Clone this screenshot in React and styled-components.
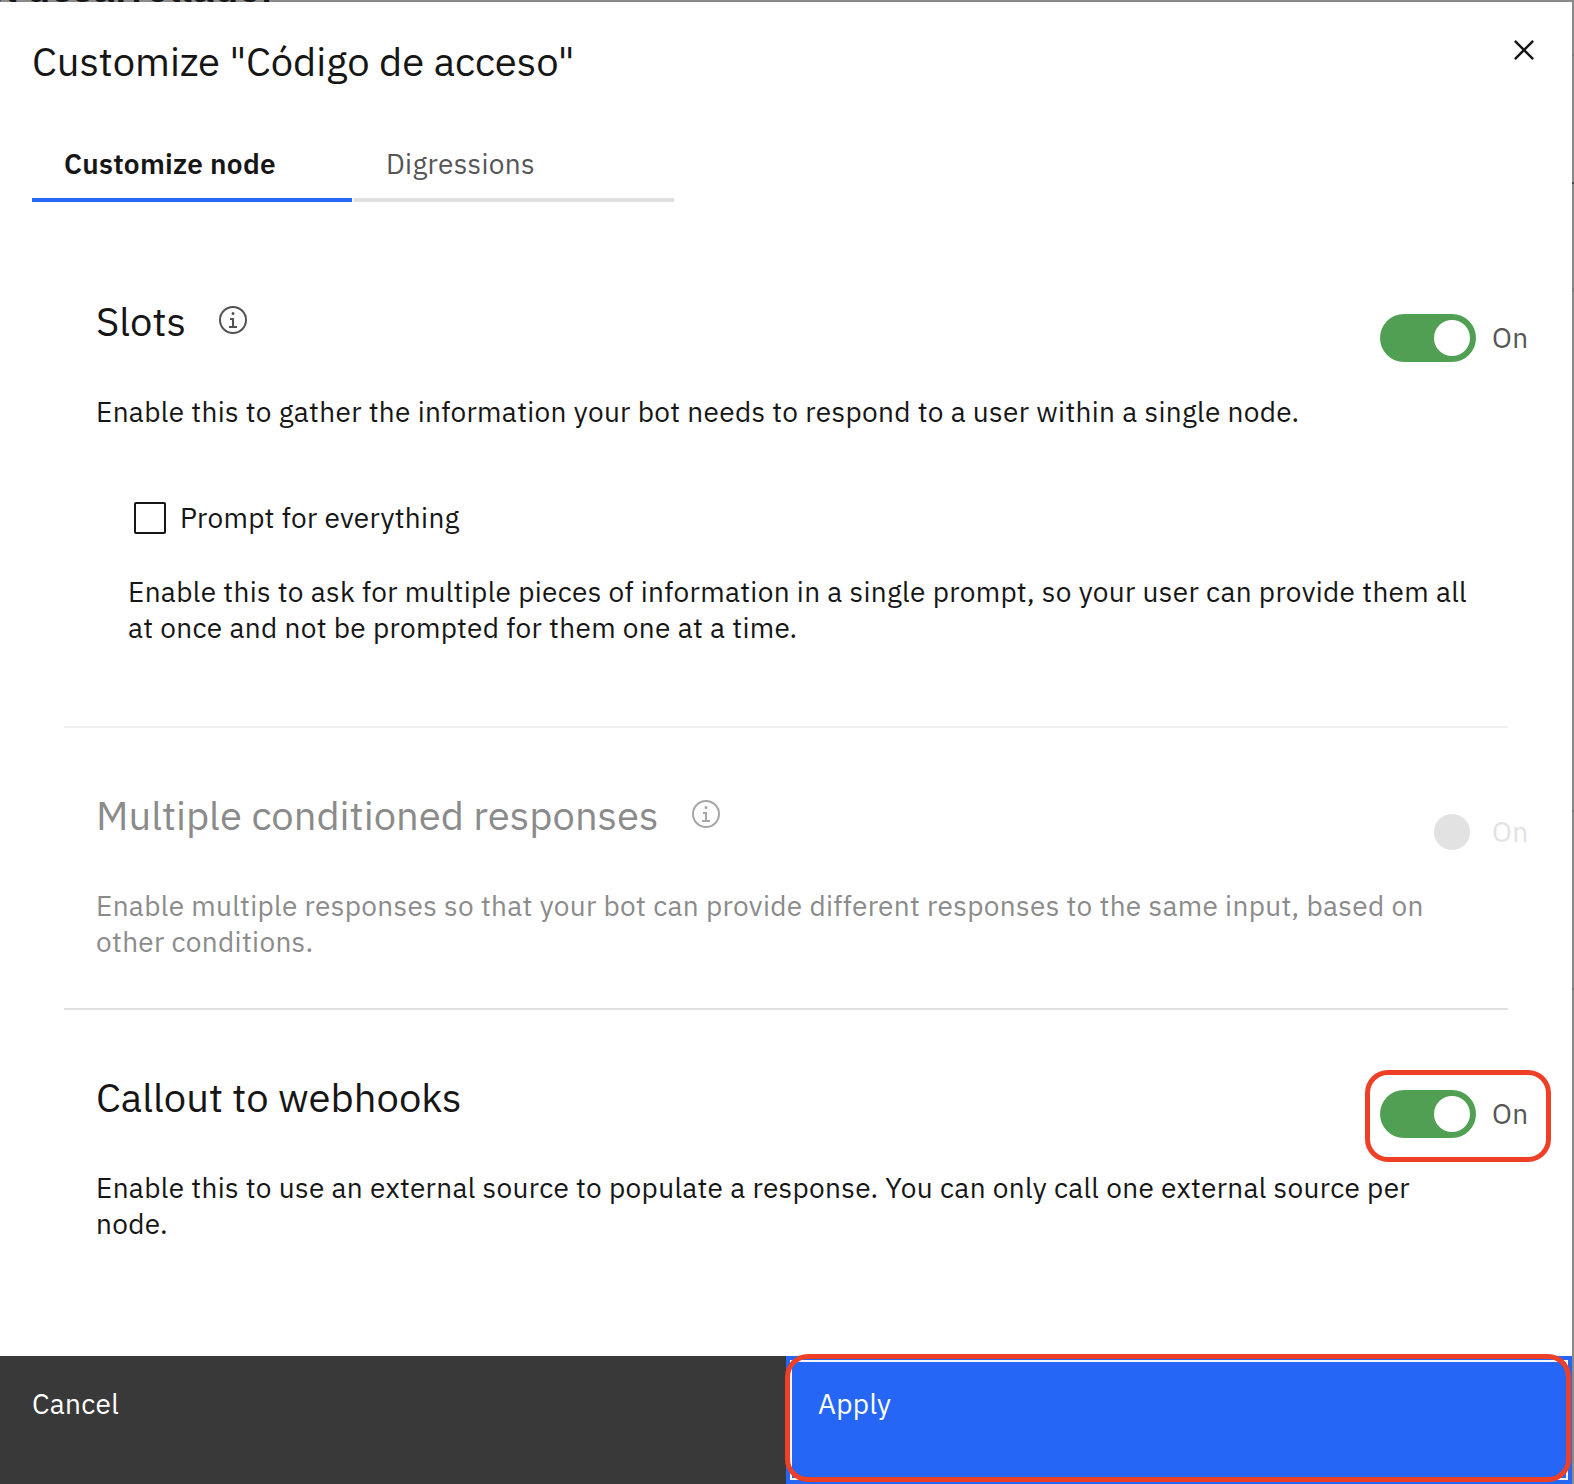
import React, { useState } from "react";
import styled, { createGlobalStyle, css } from "styled-components";

const GlobalStyle = createGlobalStyle`
  *, *::before, *::after { box-sizing: border-box; }
  body {
    margin: 0;
    color: #161616;
    font-family: "IBM Plex Sans", Roboto, "Liberation Sans", sans-serif;
  }
  button { font: inherit; border: 0; margin: 0; text-align: left; cursor: pointer; }
`;

const Backdrop = styled.div`
  position: relative;
  width: 1574px;
  height: 1484px;
  padding: 2px 2px 0 0;
  overflow: hidden;
  background:
    linear-gradient(#7c7c7c, #7c7c7c) 100% 54px / 2px 2px no-repeat,
    linear-gradient(#4c4c4c, #4c4c4c) 100% 182px / 2px 2px no-repeat,
    linear-gradient(#7c7c7c, #7c7c7c) 100% 288px / 2px 4px no-repeat,
    linear-gradient(#767676, #767676) 100% 810px / 2px 2px no-repeat,
    linear-gradient(#767676, #767676) 100% 988px / 2px 2px no-repeat,
    #8a8a8a;
`;

const PageHeading = styled.div`
  position: absolute;
  left: -17px;
  top: -39px;
  font-size: 40px;
  line-height: 52px;
  font-weight: 600;
  white-space: nowrap;
`;

const Modal = styled.div`
  position: relative;
  display: flex;
  flex-direction: column;
  width: 1572px;
  height: 1482px;
  background: #ffffff;
`;

const Header = styled.header`
  display: flex;
  justify-content: space-between;
  align-items: flex-start;
  padding: 28px 28px 0 32px;
`;

const Title = styled.h2`
  margin: 6px 0 0;
  font-size: 40px;
  line-height: 50px;
  font-weight: 400;
`;

const CloseButton = styled.button`
  display: flex;
  padding: 0;
  background: none;
  color: #161616;
`;

const Tabs = styled.nav`
  display: flex;
  gap: 2px;
  margin: 60px 0 0 32px;
`;

const Tab = styled.button`
  width: 320px;
  padding: 0 32px 16px;
  background: none;
  border-bottom: 4px solid ${(p) => (p.$active ? "#2566f6" : "#e0e0e0")};
  color: ${(p) => (p.$active ? "#161616" : "#565656")};
  font-size: 28px;
  line-height: 36px;
  font-weight: ${(p) => (p.$active ? 600 : 400)};
  letter-spacing: 0.32px;
`;

const Sections = styled.main`
  display: flex;
  flex-direction: column;
  margin-top: 94px;
`;

const Section = styled.section`
  padding: 0 42px 0 96px;
  color: ${(p) => (p.$disabled ? "#8b8b8b" : "#161616")};
`;

const SectionHead = styled.div`
  display: flex;
  justify-content: space-between;
  align-items: flex-start;
  height: 66px;
`;

const SectionTitle = styled.h3`
  display: flex;
  gap: 31.4px;
  margin: 0;
  font-size: 40px;
  line-height: 50px;
  font-weight: 400;
`;

const InfoSvg = styled.svg`
  margin-top: 8px;
  fill: ${(p) => (p.$disabled ? "#a6a6a6" : "#525252")};
`;

const Description = styled.p`
  max-width: 1368px;
  margin: 32px 0 0;
  font-size: 28px;
  line-height: 36px;
  letter-spacing: 0.32px;
`;

const ToggleGroup = styled.div`
  position: relative;
  display: flex;
  align-items: center;
  gap: 16px;
  width: 150px;
  height: 48px;
  margin-top: 18px;
`;

const Track = styled.button`
  display: flex;
  justify-content: ${(p) => (p.$on ? "flex-end" : "flex-start")};
  align-items: center;
  flex: none;
  width: 96px;
  height: 48px;
  padding: 6px;
  border-radius: 24px;
  background: ${(p) => (p.disabled ? "transparent" : p.$on ? "#509f53" : "#8d8d8d")};
`;

const Knob = styled.span`
  width: 36px;
  height: 36px;
  border-radius: 50%;
  background: ${(p) => (p.$disabled ? "#e2e2e2" : "#ffffff")};
`;

const ToggleLabel = styled.span`
  color: ${(p) => (p.$disabled ? "#e2e2e2" : "#565656")};
  font-size: 28px;
  line-height: 36px;
  letter-spacing: 0.32px;
`;

const ring = css`
  position: absolute;
  border: 5px solid #ee4027;
  border-radius: 23px;
  pointer-events: none;
`;

const ToggleRing = styled.span`
  ${ring}
  left: -15px;
  top: -20px;
  width: 186px;
  height: 92px;
`;

const ApplyRing = styled.span`
  ${ring}
  left: -1px;
  top: -2px;
  width: 786px;
  height: 128px;
`;

const SubOption = styled.div`
  margin: 70px 0 0 32px;

  ${Description} {
    margin-top: 38px;
  }
`;

const CheckRow = styled.label`
  display: flex;
  align-items: center;
  gap: 14px;
  padding-left: 6px;
  font-size: 28px;
  line-height: 36px;
  letter-spacing: 0.32px;
`;

const Checkbox = styled.input`
  appearance: none;
  width: 32px;
  height: 32px;
  margin: 0;
  border: 2px solid #161616;
  border-radius: 2px;
  background: ${(p) => (p.checked ? "#161616" : "transparent")};
`;

const Divider = styled.hr`
  width: 1444px;
  height: 2px;
  margin: ${(p) => p.$above} 0 62px 64px;
  border: 0;
  background: ${(p) => (p.$faint ? "#f0f0f0" : "#e0e0e0")};
`;

const Footer = styled.footer`
  display: flex;
  height: 128px;
  margin-top: auto;
`;

const FooterButton = styled.button`
  position: relative;
  display: flex;
  align-items: flex-start;
  flex: 1;
  padding: 30px 32px;
  color: #ffffff;
  background: ${(p) => (p.$primary ? "#2566f6" : "#393939")};
  font-size: 28px;
  line-height: 36px;
  letter-spacing: 0.32px;
  ${(p) =>
    p.$primary &&
    css`
      outline: 2px solid #f6f6f6;
      outline-offset: -6px;
    `}
`;

function CloseIcon() {
  return (
    <svg width="40" height="40" viewBox="0 0 32 32" fill="currentColor" aria-hidden="true">
      <path d="M24 9.4L22.6 8 16 14.6 9.4 8 8 9.4 14.6 16 8 22.6 9.4 24 16 17.4 22.6 24 24 22.6 17.4 16z" />
    </svg>
  );
}

function InfoIcon({ disabled }) {
  return (
    <InfoSvg width="32" height="32" viewBox="0 0 32 32" $disabled={disabled} aria-hidden="true">
      <path d="M17 22v-8h-4v2h2v6h-3v2h8v-2zM16 8a1.5 1.5 0 1 0 1.5 1.5A1.5 1.5 0 0 0 16 8z" />
      <path d="M16 30a14 14 0 1 1 14-14 14 14 0 0 1-14 14zm0-26a12 12 0 1 0 12 12A12 12 0 0 0 16 4z" />
    </InfoSvg>
  );
}

function Toggle({ disabled, highlighted }) {
  const [on, setOn] = useState(true);
  return (
    <ToggleGroup>
      <Track $on={on} disabled={disabled} onClick={() => setOn(!on)}>
        <Knob $disabled={disabled} />
      </Track>
      <ToggleLabel $disabled={disabled}>{on ? "On" : "Off"}</ToggleLabel>
      {highlighted && <ToggleRing />}
    </ToggleGroup>
  );
}

export default function App() {
  const [tab, setTab] = useState("node");
  const [promptAll, setPromptAll] = useState(false);
  return (
    <Backdrop>
      <GlobalStyle />
      <PageHeading aria-hidden="true">el desarrollador</PageHeading>
      <Modal role="dialog">
        <Header>
          <Title>Customize "Código de acceso"</Title>
          <CloseButton aria-label="Close">
            <CloseIcon />
          </CloseButton>
        </Header>
        <Tabs>
          <Tab $active={tab === "node"} onClick={() => setTab("node")}>
            Customize node
          </Tab>
          <Tab $active={tab === "digressions"} onClick={() => setTab("digressions")}>
            Digressions
          </Tab>
        </Tabs>
        <Sections>
          <Section>
            <SectionHead>
              <SectionTitle>
                Slots
                <InfoIcon />
              </SectionTitle>
              <Toggle />
            </SectionHead>
            <Description>
              Enable this to gather the information your bot needs to respond to a user within a
              single node.
            </Description>
            <SubOption>
              <CheckRow>
                <Checkbox
                  type="checkbox"
                  checked={promptAll}
                  onChange={(e) => setPromptAll(e.target.checked)}
                />
                Prompt for everything
              </CheckRow>
              <Description>
                Enable this to ask for multiple pieces of information in a single prompt, so your
                user can provide them all at once and not be prompted for them one at a time.
              </Description>
            </SubOption>
          </Section>
          <Divider $above="80px" $faint />
          <Section $disabled>
            <SectionHead>
              <SectionTitle>
                Multiple conditioned responses
                <InfoIcon disabled />
              </SectionTitle>
              <Toggle disabled />
            </SectionHead>
            <Description>
              Enable multiple responses so that your bot can provide different responses to the same
              input, based on other conditions.
            </Description>
          </Section>
          <Divider $above="48px" />
          <Section>
            <SectionHead>
              <SectionTitle>Callout to webhooks</SectionTitle>
              <Toggle highlighted />
            </SectionHead>
            <Description>
              Enable this to use an external source to populate a response. You can only call one
              external source per node.
            </Description>
          </Section>
        </Sections>
        <Footer>
          <FooterButton>Cancel</FooterButton>
          <FooterButton $primary>
            Apply
            <ApplyRing />
          </FooterButton>
        </Footer>
      </Modal>
    </Backdrop>
  );
}
